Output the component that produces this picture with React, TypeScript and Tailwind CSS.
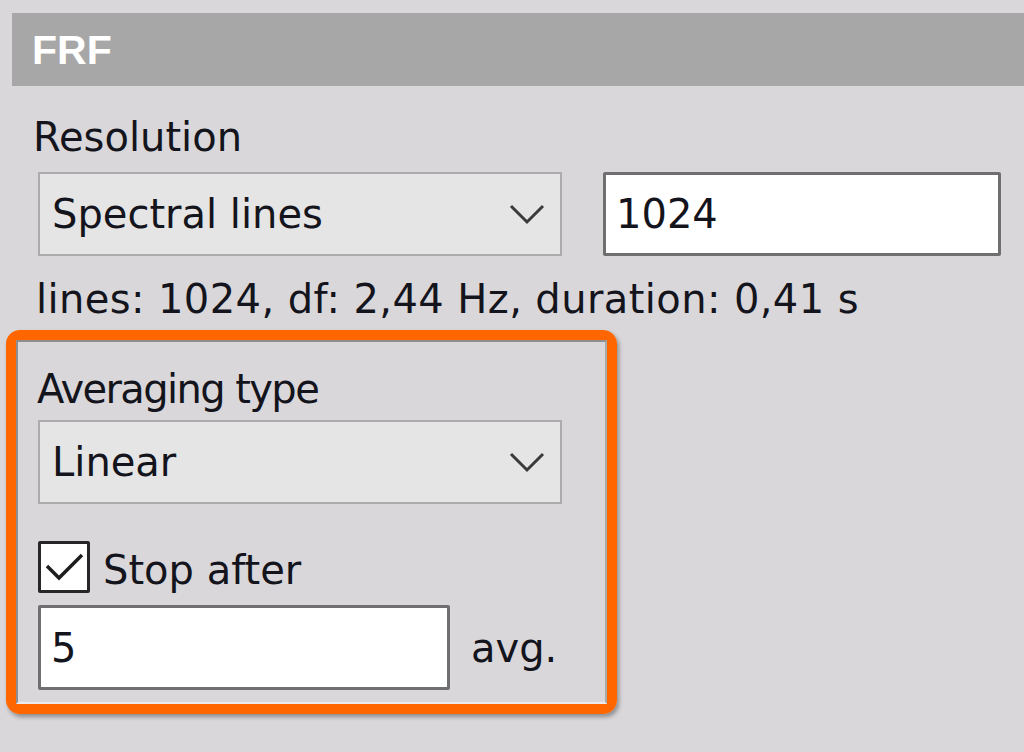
import React from 'react';

function Chevron() {
    return (
        <svg width="36" height="22" viewBox="0 0 36 22" fill="none">
            <polyline points="2,3 18,19 34,3" stroke="#3a3a3a" strokeWidth="3" />
        </svg>
    );
}

function Combo({ value, width }: { value: string; width: string }) {
    return (
        <div className={`${width} h-[84px] flex items-center justify-between bg-[#e5e5e5] border-2 border-[#acacac] pl-[12px] pr-[15px]`}>
            <span>{value}</span>
            <Chevron />
        </div>
    );
}

export default function App() {
    return (
        <div
            className="w-[1024px] h-[752px] overflow-hidden bg-[#d9d7da] pt-[13px] text-[40px] leading-[48px] text-[#14141c]"
            style={{ fontFamily: '"DejaVu Sans", "Liberation Sans", sans-serif' }}
        >
            {/* Section header */}
            <div className="ml-[12px] h-[73px] bg-[#a7a7a7] flex items-center pl-[20px]">
                <span className="text-white font-bold text-[41px]" style={{ fontFamily: '"Liberation Sans", sans-serif' }}>
                    FRF
                </span>
            </div>

            <div className="pl-[38px]">
                <div className="mt-[27px] -ml-[5px]">Resolution</div>

                <div className="mt-[11px] flex gap-[41px]">
                    <Combo value="Spectral lines" width="w-[524px]" />
                    <div className="w-[398px] h-[84px] flex items-center bg-white border-[3px] border-[#6f6f6f] rounded-[2px] pl-[10px]">
                        1024
                    </div>
                </div>

                <div className="mt-[19px] -ml-[2px] tracking-[0.4px]">lines: 1024, df: 2,44 Hz, duration: 0,41 s</div>
            </div>

            {/* Highlighted averaging group */}
            <div className="mt-[7px] ml-[6px] w-[611px] h-[384px] border-[10px] border-[#ff6600] rounded-[14px] shadow-[2px_3px_4px_rgba(0,0,0,0.35)]">
                <div className="h-full border-2 border-t-[#8e8e8e] border-l-[#8e8e8e] border-r-[#a9a9a9] border-b-[#ececec] pl-[20px] pt-[23px]">
                    <div className="-ml-[1px] tracking-[-1.6px]">Averaging type</div>

                    <div className="mt-[7px]">
                        <Combo value="Linear" width="w-[524px]" />
                    </div>

                    <div className="mt-[36px] flex items-center gap-[13px]">
                        <div className="w-[52px] h-[52px] bg-white border-[3px] border-[#262626] rounded-[2px] flex items-center justify-center">
                            <svg width="42" height="34" viewBox="0 0 42 34" fill="none">
                                <polyline points="4,16 16,28 39,5" stroke="#1e1e1e" strokeWidth="3.5" />
                            </svg>
                        </div>
                        <span className="pt-[6px]">Stop after</span>
                    </div>

                    <div className="mt-[11px] flex items-center gap-[21px]">
                        <div className="w-[412px] h-[85px] flex items-center bg-white border-[3px] border-[#6f6f6f] rounded-[2px] pl-[10px]">
                            5
                        </div>
                        <span>avg.</span>
                    </div>
                </div>
            </div>
        </div>
    );
}
